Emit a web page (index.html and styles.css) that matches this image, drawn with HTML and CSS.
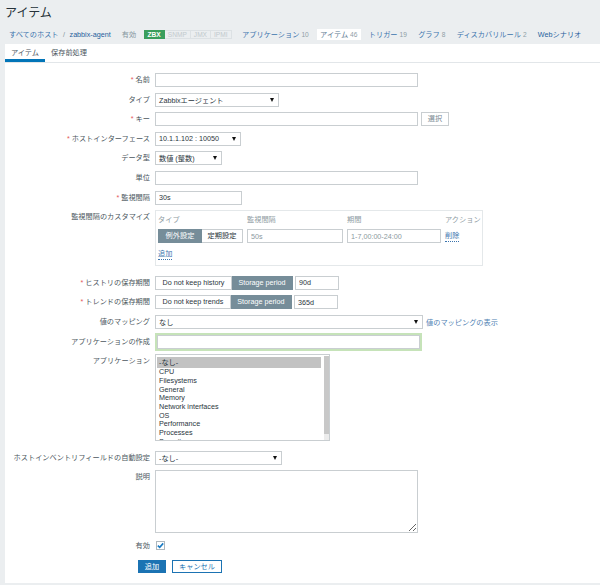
FILE: index.html
```html
<!DOCTYPE html>
<html lang="ja">
<head>
<meta charset="utf-8">
<title>アイテム</title>
<link rel="stylesheet" href="styles.css">
</head>
<body>
<header class="page-head">
  <h1 class="title">アイテム</h1>
  <nav class="host-nav">
    <span class="crumbs"><a class="nlink">すべてのホスト</a><span class="sep">/</span><a class="nlink host">zabbix-agent</a></span>
    <span class="status">有効</span>
    <span class="badges"><span class="badge on">ZBX</span><span class="badge">SNMP</span><span class="badge">JMX</span><span class="badge">IPMI</span></span>
    <ul class="host-tabs">
      <li><a class="nlink">アプリケーション</a> <span class="cnt">10</span></li>
      <li class="active"><a class="nlink">アイテム</a> <span class="cnt">46</span></li>
      <li><a class="nlink">トリガー</a> <span class="cnt">19</span></li>
      <li><a class="nlink">グラフ</a> <span class="cnt">8</span></li>
      <li><a class="nlink">ディスカバリルール</a> <span class="cnt">2</span></li>
      <li><a class="nlink web">Webシナリオ</a></li>
    </ul>
  </nav>
</header>
<main class="panel">
  <div class="tabs"><span class="tab active">アイテム</span><span class="tab">保存前処理</span></div>
  <form class="form">
    <div class="row"><label class="lbl"><span class="req">*</span>名前</label><div class="ctl"><input class="input w263" type="text"></div></div>
    <div class="row"><label class="lbl">タイプ</label><div class="ctl"><div class="select w124"><span>Zabbixエージェント</span><i class="caret"></i></div></div></div>
    <div class="row"><label class="lbl"><span class="req">*</span>キー</label><div class="ctl"><input class="input w263" type="text"><button type="button" class="btn-sel">選択</button></div></div>
    <div class="row"><label class="lbl"><span class="req">*</span>ホストインターフェース</label><div class="ctl"><div class="select w86"><span>10.1.1.102 : 10050</span><i class="caret"></i></div></div></div>
    <div class="row"><label class="lbl">データ型</label><div class="ctl"><div class="select w67"><span>数値 (整数)</span><i class="caret"></i></div></div></div>
    <div class="row"><label class="lbl">単位</label><div class="ctl"><input class="input w263" type="text"></div></div>
    <div class="row"><label class="lbl"><span class="req">*</span>監視間隔</label><div class="ctl"><input class="input w87" type="text" value="30s"></div></div>
    <div class="row gap-after"><label class="lbl">監視間隔のカスタマイズ</label>
      <div class="ctl">
        <div class="intervals">
          <span class="th">タイプ</span><span class="th">監視間隔</span><span class="th">期間</span><span class="th">アクション</span>
          <div class="seg"><span class="opt on w44">例外設定</span><span class="opt w41">定期設定</span></div>
          <input class="input dim" type="text" value="50s">
          <input class="input dim" type="text" value="1-7,00:00-24:00">
          <a class="dlink">削除</a>
          <a class="dlink add">追加</a>
        </div>
      </div>
    </div>
    <div class="row"><label class="lbl"><span class="req">*</span>ヒストリの保存期間</label><div class="ctl"><div class="seg"><span class="opt">Do not keep history</span><span class="opt on">Storage period</span></div><input class="input w44 ml2" type="text" value="90d"></div></div>
    <div class="row"><label class="lbl"><span class="req">*</span>トレンドの保存期間</label><div class="ctl"><div class="seg"><span class="opt">Do not keep trends</span><span class="opt on">Storage period</span></div><input class="input w44 ml2" type="text" value="365d"></div></div>
    <div class="row"><label class="lbl">値のマッピング</label><div class="ctl"><div class="select w268"><span>なし</span><i class="caret"></i></div><a class="plink">値のマッピングの表示</a></div></div>
    <div class="row"><label class="lbl">アプリケーションの作成</label><div class="ctl"><input class="input focus w263" type="text"></div></div>
    <div class="row gap-after"><label class="lbl">アプリケーション</label>
      <div class="ctl">
        <div class="listbox">
          <div class="opts">
            <div class="o sel">-なし-</div>
            <div class="o">CPU</div>
            <div class="o">Filesystems</div>
            <div class="o">General</div>
            <div class="o">Memory</div>
            <div class="o">Network interfaces</div>
            <div class="o">OS</div>
            <div class="o">Performance</div>
            <div class="o">Processes</div>
            <div class="o">Security</div>
          </div>
          <div class="sb"><div class="thumb"></div><div class="track"></div></div>
        </div>
      </div>
    </div>
    <div class="row"><label class="lbl">ホストインベントリフィールドの自動設定</label><div class="ctl"><div class="select w127"><span>-なし-</span><i class="caret"></i></div></div></div>
    <div class="row"><label class="lbl">説明</label><div class="ctl"><textarea class="textarea"></textarea></div></div>
    <div class="row"><label class="lbl">有効</label><div class="ctl"><span class="check"><svg width="7" height="7" viewBox="0 0 7 7"><path d="M0.8 3.6 L2.7 5.4 L6.2 1.4" fill="none" stroke="#1a7bc3" stroke-width="1.6"/></svg></span></div></div>
    <div class="actions"><button type="button" class="btn primary">追加</button><button type="button" class="btn secondary">キャンセル</button></div>
  </form>
</main>
</body>
</html>
```
FILE: styles.css
```css
* { box-sizing: border-box; }
html, body { margin: 0; padding: 0; }
body {
  background: #ebeef0;
  font-family: "Liberation Sans", "Noto Sans CJK JP", sans-serif;
  font-size: 7.2px;
  color: #1f2c33;
  width: 600px;
  height: 585px;
  overflow: hidden;
}
a { text-decoration: none; }

.page-head { padding: 5px 0 0 5px; }
.title { margin: 0; font-size: 12px; line-height: 16px; font-weight: normal; color: #26323a; }

.host-nav { display: flex; align-items: center; height: 12px; margin-top: 7px; padding-left: 4px; white-space: nowrap; }
.nlink { color: #3b74ad; }
.nlink.host { color: #1f5f9c; }
.sep { color: #8596a0; margin: 0 4.5px; }
.status { color: #8596a0; margin-left: 11px; }
.badges { display: flex; margin-left: 7.5px; }
.badge { height: 9px; line-height: 7px; padding: 0 3px; border: 1px solid #dce1e4; color: #c1c9cd; font-size: 6.6px; }
.badge + .badge { border-left: none; }
.badge.on { background: #3a9e5c; border-color: #3a9e5c; color: #fff; font-weight: bold; }
.host-tabs { display: flex; list-style: none; margin: 0 0 0 7px; padding: 0; gap: 4.3px; }
.host-tabs li { padding: 0 3.5px; line-height: 11px; }
.host-tabs li.active { background: #fff; }
.host-tabs li.active .nlink { color: #5a7890; }
.cnt { color: #8f9ea6; font-size: 6.6px; }
.nlink.web { color: #1f5f9c; }

.panel { margin: 4px 0 0 5px; background: #fff; height: 539px; }
.tabs { display: flex; height: 19px; border-bottom: 1px solid #e2e6e9; }
.tab { padding: 3px 6px 0; line-height: 12px; border-bottom: 3px solid transparent; color: #4a565e; }
.tab.active { border-bottom-color: #0275b8; }

.form { display: flex; flex-direction: column; gap: 5.6px; padding-top: 10px; }
.row { display: grid; grid-template-columns: 145px auto; column-gap: 5px; align-items: start; }
.row.gap-after { margin-bottom: 4px; }
.lbl { text-align: right; line-height: 14px; white-space: nowrap; color: #4c575e; }
.req { color: #e45959; margin-right: 2px; }
.ctl { display: flex; align-items: center; }

.input {
  height: 14px; border: 1px solid #c9ced1; background: #fff; padding: 0 3px;
  font: inherit; font-size: 7.2px; color: #2a353c; line-height: 12px; margin: 0; outline: none;
}
.input.dim { color: #8c99a0; width: 100%; }
.input.focus { box-shadow: 0 0 0 2px #c6e3b9; margin-left: 2px; }
.w263 { width: 263px; }
.w87 { width: 87px; }
.w44 { width: 44px; }
.w41 { width: 41px; }
.ml2 { margin-left: 2px; }

.select { display: flex; align-items: center; height: 14px; border: 1px solid #c9ced1; background: #fff; padding: 0 4px 0 3px; white-space: nowrap; color: #2a353c; }
.select .caret { margin-left: auto; width: 0; height: 0; border-left: 2.5px solid transparent; border-right: 2.5px solid transparent; border-top: 4px solid #111; }
.w124 { width: 124px; }
.w86 { width: 86px; }
.w67 { width: 67px; }
.w268 { width: 268px; }
.w127 { width: 127px; }

.btn-sel { height: 14px; width: 28px; margin-left: 3px; padding: 0; border: 1px solid #c9ced1; background: #fff; color: #7a8a93; font: inherit; font-size: 7.2px; line-height: 12px; }

.intervals {
  width: 328px; height: 56px; border: 1px solid #e4e8ea; padding: 4px 2px 0;
  display: grid; grid-template-columns: 85px 96px 94px auto; column-gap: 4px; row-gap: 4px; align-content: start;
}
.th { line-height: 10px; color: #8f9ca3; white-space: nowrap; }
.seg { display: flex; height: 14px; }
.seg .opt { border: 1px solid #c9ced1; padding: 0 6.5px; line-height: 12px; color: #2a353c; background: #fff; white-space: nowrap; text-align: center; }
.seg .opt + .opt { border-left: none; }
.seg .opt.on { background: #768d99; border-color: #768d99; color: #fff; }
.seg .opt.w44 { width: 44px; padding: 0; }
.seg .opt.w41 { width: 41px; padding: 0; }
.dlink { color: #3b74ad; line-height: 10px; align-self: center; justify-self: start; border-bottom: 1px dotted #3b74ad; }
.dlink.add { grid-column: 1 / 2; margin-top: 2px; }
.plink { color: #4f7fb3; margin-left: 3px; white-space: nowrap; }

.listbox { display: flex; width: 175px; height: 87px; border: 1px solid #c9ced1; background: #fff; overflow: hidden; }
.opts { flex: 1; padding: 2px 0 0 1px; overflow: hidden; }
.o { line-height: 8.7px; padding-left: 2px; white-space: nowrap; color: #2a353c; }
.o.sel { background: #c2c2c2; line-height: 11px; }
.sb { width: 8px; display: flex; flex-direction: column; padding: 1px 0 0 3px; }
.thumb { height: 78px; background: #c8c8c8; }
.track { flex: 1; background: #ececec; }

.textarea { width: 263px; height: 63px; border: 1px solid #c9ced1; background: #fff; margin: 0; padding: 2px; font: inherit; resize: both; outline: none; }

.check { width: 9px; height: 9px; border: 1px solid #aeb8be; background: #fff; display: flex; align-items: center; justify-content: center; margin: 2.5px 0 0 1px; }
.check svg { display: block; }

.actions { display: flex; gap: 6px; margin-left: 133px; margin-top: 1px; }
.btn { height: 13px; padding: 0; font: inherit; font-size: 7.2px; line-height: 11px; text-align: center; }
.btn.primary { width: 28px; background: #1b73b3; color: #fff; border: 1px solid #1b73b3; }
.btn.secondary { width: 50px; background: #fff; color: #1b73b3; border: 1px solid #1b73b3; }
```
